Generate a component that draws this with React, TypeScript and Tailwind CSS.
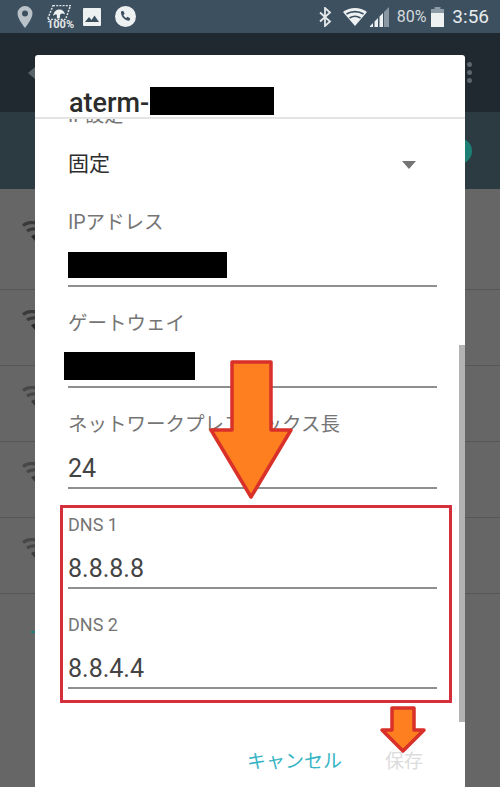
import React from "react";

const font = { fontFamily: '"Roboto","Noto Sans CJK JP",sans-serif' };

function Wifi({ className }: { className: string }) {
  return (
    <svg width="14" height="21" viewBox="0 0 14 21" className={`ml-[22px] ${className}`}>
      <g fill="none" stroke="#3a3a3a" strokeWidth="3.200">
        <path d="M1 4.500C5 1.500 10 1 14 2" />
        <path d="M5 10C7.500 8 11 7.500 14 8" />
      </g>
      <path d="M9 15.500C10.500 14 12.500 13.500 14 13.500V21Z" fill="#2a2a2a" />
    </svg>
  );
}

function Field({ label, value, mask, maskClass, labelClass }: { label: string; value?: string; mask?: boolean; maskClass?: string; labelClass?: string }) {
  return (
    <div className="flex flex-col">
      <div className={labelClass ?? "text-[19.500px] leading-[24px] text-[#757575]"}>{label}</div>
      <div className="flex items-end h-[50px]">
        {mask ? <div className={`bg-black ${maskClass}`} /> : <span className="text-[25px] leading-[32px] text-[#444] pb-[2px]">{value}</span>}
      </div>
      <div className="h-[2px] w-[369px] bg-[#8f8f8f]" />
    </div>
  );
}

export default function App() {
  return (
    <div className="relative w-[500px] h-[787px] overflow-hidden bg-[#666]" style={font}>
      {/* Status bar */}
      <div className="h-[33px] bg-[#3d5060] flex items-center pl-[17px] pr-[11px] text-[#e4e8ea]">
        <svg width="16" height="22" viewBox="0 0 16 22" className="mr-[14px]"><path fillRule="evenodd" d="M8 0a7.5 7.5 0 0 0-7.5 7.5C.5 13 8 22 8 22s7.5-9 7.5-14.500A7.500 7.500 0 0 0 8 0Zm0 10.500a3 3 0 1 1 0-6 3 3 0 0 1 0 6Z" fill="#b9c2c8" /></svg>
        <div className="relative w-[24px] h-[24px] mr-[12px]">
          <svg width="24" height="15" viewBox="0 0 24 15" className="absolute top-0 left-0">
            <path d="M6 .5H23.500L18.500 14.500H.5Z" fill="none" stroke="#dfe4e7" strokeWidth="1.500" strokeDasharray="2 1.200" />
            <path d="M6 11c1-5 3.500-6.500 6.500-6.500s5 2 5.500 5c-2.500-1.500-3.500-1-5 .2V12c0 2-3 2-3.200.3 0-1 .5-2-.3-2.700C8.500 9 7 9.800 6 11Z" fill="#eef1f2" />
          </svg>
          <span className="absolute left-0 top-[14px] text-[11px] leading-[11px] font-bold whitespace-nowrap">100%</span>
        </div>
        <svg width="18" height="18" viewBox="0 0 18 18" className="mr-[14px]"><rect width="18" height="18" rx="1" fill="#eef1f2" /><path d="M2 14l4-5 2.500 3 3-4.500L16 14Z" fill="#3d5060" /></svg>
        <svg width="21" height="21" viewBox="0 0 21 21"><circle cx="10.500" cy="10.500" r="10.500" fill="#eef1f2" /><path d="M6 5.500l2.200-.8 1.500 3-1.300 1.200c.6 1.400 1.500 2.300 2.800 3l1.300-1.200 2.800 1.700-.8 2.200c-4.500.5-9-4.300-8.500-9.100Z" fill="#3d5060" /></svg>
        <div className="flex-1" />
        <svg width="13" height="20" viewBox="0 0 13 20" className="mr-[11px]"><path d="M1 5.500l10 9-5 4.500V1l5 4.500-10 9" fill="none" stroke="#e4e8ea" strokeWidth="1.800" /></svg>
        <svg width="24" height="18" viewBox="0 0 24 18" className="mr-[3px]"><path d="M12 18 0 4c7-5.300 17-5.300 24 0Z" fill="#eef1f2" /><path d="M3.500 6c5-3.200 12-3.200 17 0M6.500 10c3.400-2.200 7.600-2.200 11 0" fill="none" stroke="#3d5060" strokeWidth="1.600" /></svg>
        <svg width="19" height="20" viewBox="0 0 19 20" className="mr-[8px]">
          <path d="M14 5 19 0v20h-5Z" fill="#8a98a3" />
          <path d="M0 20V19L3 16V20ZM4.500 20V14.500L8 11V20ZM9.500 20V9.500L13 6V20Z" fill="#eef1f2" />
        </svg>
        <span className="text-[16px] leading-[20px] text-[#d4dade] mr-[5px]">80%</span>
        <svg width="13" height="20" viewBox="0 0 13 20" className="mr-[8px]"><rect x="3.500" width="6" height="3" fill="#8c9aa5" /><rect y="2" width="13" height="4" fill="#8c9aa5" /><rect y="6" width="13" height="14" fill="#eef1f2" /></svg>
        <span className="text-[19px] leading-[22px] text-[#e8ecee]">3:56</span>
      </div>

      {/* Toolbar behind the dialog */}
      <div className="h-[79px] bg-[#20292f] flex items-center justify-between pl-[28px] pr-[28px]">
        <svg width="7" height="12" viewBox="0 0 7 12"><path d="M7 0 0 6l7 6Z" fill="#59636a" /></svg>
        <div className="flex flex-col gap-[3px]">
          <span className="w-[5px] h-[5px] rounded-full bg-[#5d666c]" />
          <span className="w-[5px] h-[5px] rounded-full bg-[#5d666c]" />
          <span className="w-[5px] h-[5px] rounded-full bg-[#5d666c]" />
        </div>
      </div>
      <div className="h-[77px] bg-[#2c3a42] flex items-center justify-end">
        <div className="w-[18px] h-[26px] rounded-r-full bg-[#1d7f74] mr-[28px]" />
      </div>

      {/* List behind the dialog */}
      <div className="flex flex-col">
        <div className="h-[101px] border-b border-[#565656] flex items-start pt-[32px]">
          <Wifi className="" />
        </div>
        {[0, 1, 2, 3].map((i) => (
          <div key={i} className="h-[76px] border-b border-[#565656] flex items-start pt-[20px]">
            <Wifi className={i === 0 ? "" : "opacity-70"} />
          </div>
        ))}
        <div className="h-[76px] flex items-center pl-[31px]"><div className="w-[4px] h-[2px] bg-[#1d7f74]" /></div>
      </div>

      {/* Dialog */}
      <div className="absolute left-[35px] top-[55px] w-[430px] h-[732px] bg-white rounded-t-[3px] flex flex-col">
        <div className="h-[64px] border-b-2 border-[#e4e4e4] pl-[34px] pt-[29px] shrink-0 flex items-start">
          <span className="text-[27px] leading-[38px] text-[#2c2c2c] font-medium">aterm-</span>
          <div className="bg-black w-[124px] h-[28px] mt-[3px] ml-[1px]" />
        </div>
        <div className="relative flex-1 pl-[33px] overflow-hidden">
          <div className="h-[10px] overflow-hidden relative">
            <span className="absolute top-[-15px] left-0 text-[19px] leading-[24px] text-[#757575]">IP設定</span>
          </div>
          <div className="h-[82px] flex items-center justify-between pr-[49px] pb-[10px] text-[#2e2e2e] text-[21px]">
            <span>固定</span>
            <svg width="14" height="8" viewBox="0 0 14 8"><path d="M0 0h14L7 8Z" fill="#757575" /></svg>
          </div>
          <div className="flex flex-col gap-[25px]">
            <Field label="IPアドレス" mask maskClass="w-[159px] h-[26px] mb-[7px]" />
            <Field label="ゲートウェイ" mask maskClass="w-[131px] h-[28px] mb-[6px] ml-[-4px]" />
            <Field label="ネットワークプレフィックス長" value="24" />
          </div>
          <div className="flex flex-col gap-[24px] mt-[24px]">
            <Field label="DNS 1" value="8.8.8.8" labelClass="text-[18px] leading-[24px] text-[#757575]" />
            <Field label="DNS 2" value="8.8.4.4" labelClass="text-[18px] leading-[24px] text-[#757575]" />
          </div>
          <div className="absolute right-0 top-[226px] w-[6px] h-[377px] bg-[#b3b3b3]" />
        </div>
        <div className="absolute right-[42px] bottom-[12px] flex gap-[43px] text-[19px] leading-[26px]">
          <span className="text-[#36b4c4]">キャンセル</span>
          <span className="text-[#dcdcdc]">保存</span>
        </div>
      </div>

      {/* Annotations */}
      <div className="absolute left-[60px] top-[505px] w-[392px] h-[198px] border-[3px] border-[#d32f3c]" />
      <svg width="500" height="787" viewBox="0 0 500 787" className="absolute left-0 top-0 pointer-events-none">
        <path d="M232 362H271V430H291L251 497 211 430H232Z" fill="#fd7f20" stroke="#d9302a" strokeWidth="3.500" strokeLinejoin="round" />
        <path d="M392 708H414V730H424L403 751 382 730H392Z" fill="#fd7f20" stroke="#d9302a" strokeWidth="3.500" strokeLinejoin="round" />
      </svg>
    </div>
  );
}
